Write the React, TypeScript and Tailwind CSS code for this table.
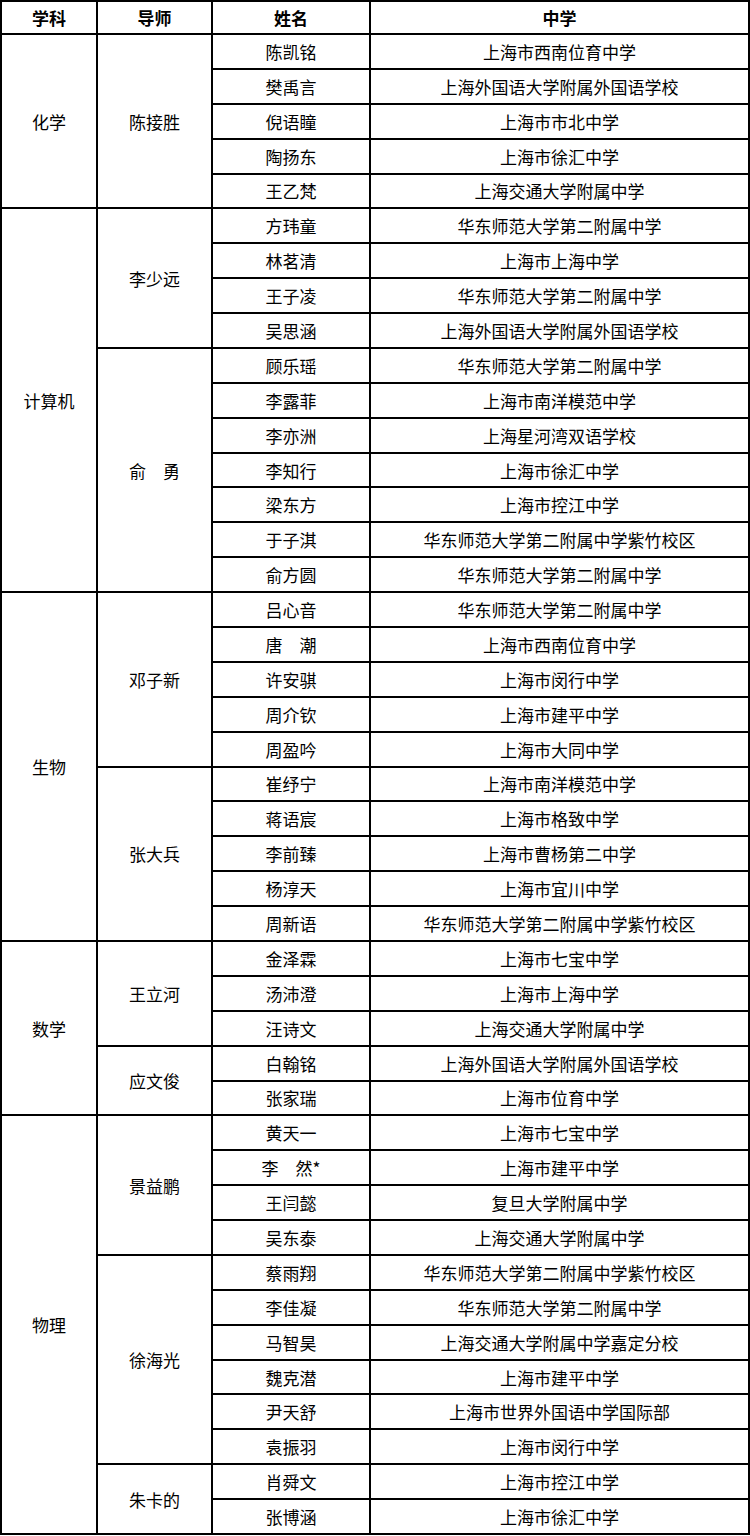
import React from "react";

type Student = [string, string];
type Group = { mentor: string; students: Student[] };
type Subject = { name: string; groups: Group[] };

const data: Subject[] = [
  {
    name: "化学",
    groups: [
      {
        mentor: "陈接胜",
        students: [
          ["陈凯铭", "上海市西南位育中学"],
          ["樊禹言", "上海外国语大学附属外国语学校"],
          ["倪语瞳", "上海市市北中学"],
          ["陶扬东", "上海市徐汇中学"],
          ["王乙梵", "上海交通大学附属中学"],
        ],
      },
    ],
  },
  {
    name: "计算机",
    groups: [
      {
        mentor: "李少远",
        students: [
          ["方玮童", "华东师范大学第二附属中学"],
          ["林茗清", "上海市上海中学"],
          ["王子凌", "华东师范大学第二附属中学"],
          ["吴思涵", "上海外国语大学附属外国语学校"],
        ],
      },
      {
        mentor: "俞　勇",
        students: [
          ["顾乐瑶", "华东师范大学第二附属中学"],
          ["李露菲", "上海市南洋模范中学"],
          ["李亦洲", "上海星河湾双语学校"],
          ["李知行", "上海市徐汇中学"],
          ["梁东方", "上海市控江中学"],
          ["于子淇", "华东师范大学第二附属中学紫竹校区"],
          ["俞方圆", "华东师范大学第二附属中学"],
        ],
      },
    ],
  },
  {
    name: "生物",
    groups: [
      {
        mentor: "邓子新",
        students: [
          ["吕心音", "华东师范大学第二附属中学"],
          ["唐　潮", "上海市西南位育中学"],
          ["许安骐", "上海市闵行中学"],
          ["周介钦", "上海市建平中学"],
          ["周盈吟", "上海市大同中学"],
        ],
      },
      {
        mentor: "张大兵",
        students: [
          ["崔纾宁", "上海市南洋模范中学"],
          ["蒋语宸", "上海市格致中学"],
          ["李前臻", "上海市曹杨第二中学"],
          ["杨淳天", "上海市宜川中学"],
          ["周新语", "华东师范大学第二附属中学紫竹校区"],
        ],
      },
    ],
  },
  {
    name: "数学",
    groups: [
      {
        mentor: "王立河",
        students: [
          ["金泽霖", "上海市七宝中学"],
          ["汤沛澄", "上海市上海中学"],
          ["汪诗文", "上海交通大学附属中学"],
        ],
      },
      {
        mentor: "应文俊",
        students: [
          ["白翰铭", "上海外国语大学附属外国语学校"],
          ["张家瑞", "上海市位育中学"],
        ],
      },
    ],
  },
  {
    name: "物理",
    groups: [
      {
        mentor: "景益鹏",
        students: [
          ["黄天一", "上海市七宝中学"],
          ["李　然*", "上海市建平中学"],
          ["王闫懿", "复旦大学附属中学"],
          ["吴东泰", "上海交通大学附属中学"],
        ],
      },
      {
        mentor: "徐海光",
        students: [
          ["蔡雨翔", "华东师范大学第二附属中学紫竹校区"],
          ["李佳凝", "华东师范大学第二附属中学"],
          ["马智昊", "上海交通大学附属中学嘉定分校"],
          ["魏克潜", "上海市建平中学"],
          ["尹天舒", "上海市世界外国语中学国际部"],
          ["袁振羽", "上海市闵行中学"],
        ],
      },
      {
        mentor: "朱卡的",
        students: [
          ["肖舜文", "上海市控江中学"],
          ["张博涵", "上海市徐汇中学"],
        ],
      },
    ],
  },
];

const cell = "flex items-center justify-center border-r-2 border-b-2 border-black";

// span counts are fixed and small, so list them out in full
const spans: Record<number, string> = {
  2: "row-span-2",
  3: "row-span-3",
  4: "row-span-4",
  5: "row-span-5",
  6: "row-span-6",
  7: "row-span-7",
  10: "row-span-10",
  11: "row-span-11",
  12: "row-span-12",
};

export default function App() {
  const cells: React.ReactNode[] = [];

  data.forEach((subject) => {
    const total = subject.groups.reduce((n, g) => n + g.students.length, 0);
    let subjectDone = false;
    subject.groups.forEach((group) => {
      group.students.forEach(([name, school], i) => {
        if (!subjectDone) {
          cells.push(
            <div key={subject.name} className={`${cell} col-start-1 ${spans[total]}`}>
              {subject.name}
            </div>
          );
          subjectDone = true;
        }
        if (i === 0) {
          cells.push(
            <div key={group.mentor} className={`${cell} col-start-2 ${spans[group.students.length] ?? ""}`}>
              {group.mentor}
            </div>
          );
        }
        cells.push(
          <div key={name} className={`${cell} col-start-3`}>
            {name}
          </div>
        );
        cells.push(
          <div key={name + school} className={`${cell} col-start-4`}>
            {school}
          </div>
        );
      });
    });
  });

  return (
    <div className="w-[750px] bg-white text-black font-['Noto_Sans_CJK_SC','Noto_Sans',sans-serif] text-[17px] leading-none">
      <div className="grid h-[1535px] grid-cols-[96px_115px_158px_379px] grid-rows-[33px_repeat(43,minmax(0,1fr))] border-l-2 border-t-2 border-black">
        <div className={`${cell} font-bold`}>学科</div>
        <div className={`${cell} font-bold`}>导师</div>
        <div className={`${cell} font-bold`}>姓名</div>
        <div className={`${cell} font-bold`}>中学</div>
        {cells}
      </div>
    </div>
  );
}
